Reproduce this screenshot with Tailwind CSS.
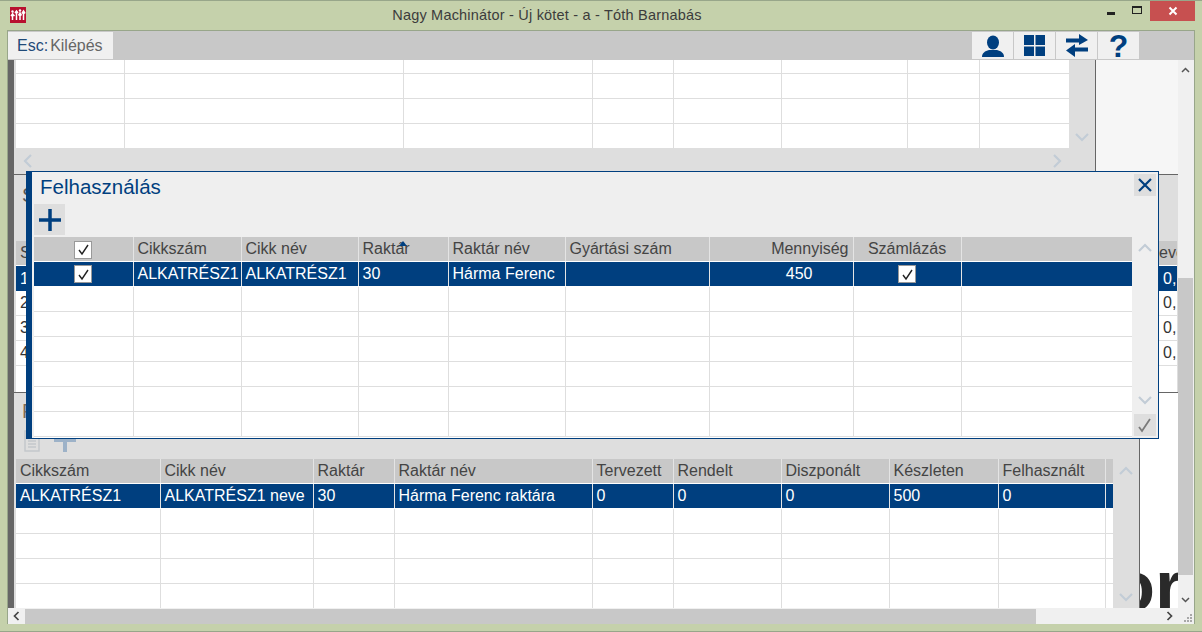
<!DOCTYPE html>
<html lang="hu">
<head>
    <meta charset="UTF-8">
    <title>Nagy Machinátor</title>
    <script src="https://cdn.jsdelivr.net/npm/@tailwindcss/browser@4"></script>
</head>
<body class="bg-[#c5d1ab] overflow-hidden">
<div class="relative w-[1202px] h-[632px] flex flex-col border-t border-b border-[#98a68a] font-['Liberation_Sans',Arial,sans-serif] text-[16px] text-[#333]">

    <!-- title bar -->
    <div class="relative h-[29px] shrink-0 flex items-center justify-center pr-[108px] text-[14.5px] text-[#3c3c3c] tracking-[0.2px]">
        <svg class="absolute left-[10px] top-[6px]" width="16" height="16" viewBox="0 0 16 16">
            <rect width="16" height="16" fill="#b8102f"/>
            <path d="M2.500 13V7L1 9M2.500 7l2 2M6.500 13V4M5 6l1.500-2L8 6M10 13V6M8.500 8.500L10 6l1.500 2.500M13.500 13V4M12 6.500L13.500 4 15 6.500" stroke="#fff" stroke-width="1.500" fill="none"/>
            <circle cx="2.500" cy="4.500" r="1.200" fill="#fff"/><circle cx="10" cy="3.500" r="1.200" fill="#fff"/>
        </svg>
        <span>Nagy Machinátor - Új kötet - a - Tóth Barnabás</span>
        <div class="absolute right-[7px] top-0 flex items-start">
            <div class="w-[27px] h-[20px] flex items-end justify-center"><div class="w-[8px] h-[3px] bg-[#222] mb-[6px]"></div></div>
            <div class="w-[26px] h-[20px] flex items-center justify-center"><div class="w-[10px] h-[8px] -mt-[2px] border border-t-2 border-[#222]"></div></div>
            <div class="w-[45px] h-[20px] bg-[#c75050] flex items-center justify-center">
                <svg width="10" height="10" viewBox="0 0 10 10"><path d="M1.500 1.500l7 7M8.500 1.500l-7 7" stroke="#fff" stroke-width="2"/></svg>
            </div>
        </div>
    </div>

    <div class="mx-[7px] flex-1 min-h-0 flex flex-col border-t border-l border-r border-[#98a68a] mb-[7px]">
        <!-- toolbar -->
        <div class="h-[29px] shrink-0 pt-[1px] bg-[#c8c8c8] flex justify-between">
            <div class="w-[105px] h-[27px] bg-[#f0f0f0] flex items-center pl-[9px]">
                <span class="text-[#1f4a78]">Esc:</span><span class="text-[#666] ml-[2px]">Kilépés</span>
            </div>
            <div class="flex gap-[1px] mr-[55px] h-[27px]">
                <div class="w-[41px] bg-[#f0f0f0] flex items-center justify-center">
                    <svg width="22" height="22" viewBox="0 0 22 22" fill="#003f7f"><ellipse cx="11" cy="7.500" rx="6" ry="7"/><path d="M0 22c0-4 3-6 7-7h8c4 1 7 3 7 7z"/></svg>
                </div>
                <div class="w-[41px] bg-[#f0f0f0] flex items-center justify-center">
                    <svg width="21" height="21" viewBox="0 0 21 21" fill="#003f7f"><rect width="10" height="10"/><rect x="11.500" width="9.500" height="10"/><rect y="11.500" width="10" height="9.500"/><rect x="11.500" y="11.500" width="9.500" height="9.500"/></svg>
                </div>
                <div class="w-[41px] bg-[#f0f0f0] flex items-center justify-center">
                    <svg width="24" height="24" viewBox="0 0 24 24" fill="#003f7f"><path d="M1 4.500h13V0l9 6-9 5V8.500H1zM23 13.500H10V10l-9 6.500 9 6.500v-5.500h13z"/></svg>
                </div>
                <div class="w-[41px] bg-[#f0f0f0] flex items-center justify-center text-[#003f7f] font-bold text-[32px] leading-none">?</div>
            </div>
        </div>

        <div class="flex-1 min-h-0 flex">
            <div class="w-[6px] bg-[#666]"></div>

            <div class="w-[1164px] flex flex-col">
                <!-- upper grid -->
                <div class="h-[114px] shrink-0 flex bg-[#f6f6f6]">
                    <div class="w-[1082px] bg-[#dedede] border-r border-[#666] pl-[2px] flex flex-col">
                        <div class="h-[88px] flex">
                            <div class="w-[1053px] bg-white overflow-hidden"><table class="-mt-[12px] table-fixed border-collapse w-[1053px]" data-rows="4" data-cols="108,279,189,81,108,126,72,90"></table></div>
                            <div class="w-[26px] flex flex-col justify-end items-center pb-[6px]">
                                <svg width="16" height="10" viewBox="0 0 16 10"><path d="M2 2l6 6 6-6" stroke="#c2ccd6" stroke-width="2.200" fill="none"/></svg>
                            </div>
                        </div>
                        <div class="h-[26px] flex justify-between items-center pl-[7px] pr-[33px]">
                            <svg width="10" height="16" viewBox="0 0 10 16"><path d="M8 2L2 8l6 6" stroke="#c2ccd6" stroke-width="2.200" fill="none"/></svg>
                            <svg width="10" height="16" viewBox="0 0 10 16"><path d="M2 2l6 6-6 6" stroke="#c2ccd6" stroke-width="2.200" fill="none"/></svg>
                        </div>
                    </div>
                </div>

                <!-- middle panel, mostly under the dialog -->
                <div class="h-[219px] shrink-0 bg-[#dedede] border-t border-b border-[#666] pl-[2px] pr-[1px] flex flex-col">
                    <div class="h-[66px] shrink-0 pl-[6px] pt-[5px] text-[#555] text-[20px]">S</div>
                    <div class="h-[25px] flex bg-[#c8c8c8] text-[#444] items-center border-b border-white"><span class="pl-[4px]">S</span><span class="ml-auto w-[18px] overflow-hidden">eve</span></div>
                    <div class="h-[25px] flex bg-[#003f7f] text-white items-center"><span class="pl-[4px]">1</span><span class="ml-auto w-[18px] pl-[4px] overflow-hidden">0,</span></div>
                    <div class="h-[25px] flex bg-white items-center border-b border-[#dedede]"><span class="pl-[4px]">2</span><span class="ml-auto w-[18px] pl-[4px] overflow-hidden">0,</span></div>
                    <div class="h-[25px] flex bg-white items-center border-b border-[#dedede]"><span class="pl-[4px]">3</span><span class="ml-auto w-[18px] pl-[4px] overflow-hidden">0,</span></div>
                    <div class="h-[25px] flex bg-white items-center border-b border-[#dedede]"><span class="pl-[4px]">4</span><span class="ml-auto w-[18px] pl-[4px] overflow-hidden">0,</span></div>
                    <div class="flex-1 bg-white"></div>
                </div>

                <!-- lower grid -->
                <div class="flex-1 min-h-0 flex bg-white overflow-hidden">
                    <div class="w-[1126px] shrink-0 bg-[#dedede] border-r border-[#666] pl-[2px] flex flex-col">
                        <div class="h-[66px] shrink-0 pl-[8px] flex flex-col">
                            <div class="h-[37px] shrink-0 -ml-[2px] pt-[6px] text-[#7a6a5a] text-[20px] leading-[24px]">F</div>
                            <div class="flex items-start gap-[14px]">
                                <svg width="16" height="22" viewBox="0 0 16 22" fill="none" stroke="#c4c8cc" stroke-width="1.500"><path d="M1 1h9l5 5v15H1zM4 11h8M4 14h8M4 17h8"/></svg>
                                <svg width="22" height="22" viewBox="0 0 22 22"><path d="M0 10h22M11 0v22" stroke="#9db2c8" stroke-width="4"/></svg>
                            </div>
                        </div>
                        <div class="flex flex-1 min-h-0">
                            <div class="w-[1098px] bg-white overflow-hidden"><table class="table-fixed border-collapse w-[1098px]" id="lowerGrid"></table></div>
                            <div class="w-[26px] flex flex-col justify-between items-center pt-[7px] pb-[6px]">
                                <svg width="16" height="10" viewBox="0 0 16 10"><path d="M2 8l6-6 6 6" stroke="#c2ccd6" stroke-width="2.200" fill="none"/></svg>
                                <svg width="16" height="10" viewBox="0 0 16 10"><path d="M2 2l6 6 6-6" stroke="#c2ccd6" stroke-width="2.200" fill="none"/></svg>
                            </div>
                        </div>
                    </div>
                    <div class="flex-1 min-w-0 flex items-end justify-end overflow-hidden"><span class="shrink-0 -mr-[5px] -mb-[14px] font-bold text-[#2a2a2a] text-[72px] leading-none whitespace-nowrap">or</span></div>
                </div>
            </div>

            <!-- window scrollbar, vertical -->
            <div class="flex-1 bg-[#f0f0f0] flex flex-col pr-[1px]">
                <div class="h-[16px] shrink-0 flex items-center justify-center mt-[2px]"><svg width="9" height="6" viewBox="0 0 9 6"><path d="M1 5l3.500-3.500L8 5" stroke="#555" stroke-width="1.500" fill="none"/></svg></div>
                <div class="h-[200px] shrink-0"></div>
                <div class="h-[297px] shrink-0 bg-[#c8c8c8]"></div>
                <div class="flex-1 flex items-center justify-center pt-[16px]"><svg width="9" height="6" viewBox="0 0 9 6"><path d="M1 1l3.500 3.500L8 1" stroke="#555" stroke-width="1.500" fill="none"/></svg></div>
            </div>
        </div>

        <!-- window scrollbar, horizontal -->
        <div class="h-[16px] shrink-0 bg-[#f0f0f0] flex items-center">
            <div class="w-[17px] flex justify-center"><svg width="7" height="10" viewBox="0 0 7 10"><path d="M5.500 1L1.500 5l4 4" stroke="#444" stroke-width="1.700" fill="none"/></svg></div>
            <div class="w-[1011px] h-[15px] bg-[#c8c8c8]"></div>
            <div class="flex-1 flex justify-end pr-[21px]"><svg width="7" height="10" viewBox="0 0 7 10"><path d="M1.500 1l4 4-4 4" stroke="#444" stroke-width="1.700" fill="none"/></svg></div>
        </div>
    </div>

    <!-- Felhasználás dialog -->
    <div class="absolute left-[26px] top-[170px] w-[1133px] h-[268px] flex bg-[#efefef] border-t border-b border-r border-[#003f7f]">
        <div class="w-[6px] bg-[#003f7f] shrink-0"></div>
        <div class="flex-1 min-w-0 pl-[2px] flex flex-col">
            <div class="h-[32px] shrink-0 flex justify-between pr-[2px]">
                <div class="text-[20.500px] leading-[30px] pl-[6px] text-[#003f7f]">Felhasználás</div>
                <div class="w-[22px] h-[22px] mt-[2px] bg-[#dedede] flex items-center justify-center">
                    <svg width="16" height="16" viewBox="0 0 16 16"><path d="M2 2l12 12M14 2L2 14" stroke="#003f7f" stroke-width="2.200"/></svg>
                </div>
            </div>
            <div class="h-[33px] shrink-0">
                <div class="w-[31px] h-[31px] bg-[#dedede] flex items-center justify-center">
                    <svg width="22" height="22" viewBox="0 0 22 22"><path d="M0 11h22M11 0v22" stroke="#003f7f" stroke-width="3.500"/></svg>
                </div>
            </div>
            <div class="flex-1 min-h-0 flex">
                <div class="w-[1098px] bg-white overflow-hidden"><table class="table-fixed border-collapse w-[1098px]" id="useGrid"></table></div>
                <div class="flex-1 flex flex-col items-center">
                    <svg class="mt-[6px]" width="16" height="10" viewBox="0 0 16 10"><path d="M2 8l6-6 6 6" stroke="#c2ccd6" stroke-width="2.200" fill="none"/></svg>
                    <svg class="mt-[142px]" width="16" height="10" viewBox="0 0 16 10"><path d="M2 2l6 6 6-6" stroke="#c2ccd6" stroke-width="2.200" fill="none"/></svg>
                    <div class="mt-[9px] w-[22px] h-[22px] bg-[#dedede] flex items-center justify-center">
                        <svg width="16" height="16" viewBox="0 0 16 16"><path d="M2 10l3 4L13 2" stroke="#7a7a7a" stroke-width="1.800" fill="none"/></svg>
                    </div>
                </div>
            </div>
        </div>
    </div>

    <!-- sort arrow on Raktár -->
    <svg class="absolute left-[399px] top-[240px]" width="8" height="5" viewBox="0 0 8 5"><path d="M4 0l4 5H0z" fill="#003f7f"/></svg>

    <!-- resize grip -->
    <svg class="absolute left-[1183px] top-[612px]" width="10" height="10" viewBox="0 0 10 10" fill="#a8a8a8"><rect x="7" y="1" width="2" height="2"/><rect x="4" y="4" width="2" height="2"/><rect x="7" y="4" width="2" height="2"/><rect x="1" y="7" width="2" height="2"/><rect x="4" y="7" width="2" height="2"/><rect x="7" y="7" width="2" height="2"/></svg>
</div>

<script>
const CHECK = '<span class="inline-flex align-middle w-[18px] h-[18px] bg-white border border-[#999] items-center justify-center"><svg width="13" height="13" viewBox="0 0 13 13"><path d="M2 7l3 4 6-9" stroke="#222" stroke-width="1.400" fill="none"/></svg></span>';

function cell(text, align, kind) {
    const alignClass = align === 'c' ? 'text-center' : align === 'r' ? 'text-right' : 'text-left';
    if (kind === 'head') return `<td class="h-[24px] p-0 px-[4px] leading-[20px] bg-[#c8c8c8] text-[#444] border-r border-[#e4e4e4] border-b border-b-white whitespace-nowrap overflow-hidden font-normal ${alignClass}">${text}</td>`;
    if (kind === 'sel') return `<td class="h-[25px] p-0 px-[4px] leading-[20px] bg-[#003f7f] text-white border-r border-[#e4e4e4] border-b border-b-white whitespace-nowrap overflow-hidden ${alignClass}">${text}</td>`;
    return `<td class="h-[25px] p-0 px-[4px] leading-[20px] bg-white border-r border-b border-[#dedede]">${text}</td>`;
}

function buildGrid(table, widths, head, sel, aligns, emptyRows) {
    let html = '<colgroup>' + widths.map(w => `<col style="width:${w}px">`).join('') + '</colgroup>';
    if (head) html += '<tr>' + head.map((t, i) => cell(t, aligns[i], 'head')).join('') + '</tr>';
    if (sel) html += '<tr>' + sel.map((t, i) => cell(t, aligns[i], 'sel')).join('') + '</tr>';
    for (let r = 0; r < emptyRows; r++) {
        html += '<tr>' + widths.map(() => cell('')).join('') + '</tr>';
    }
    table.innerHTML = html;
}

// upper grid has no visible text, only lines
const upper = document.querySelector('[data-rows]');
buildGrid(upper, upper.dataset.cols.split(',').map(Number), null, null, [], Number(upper.dataset.rows));

buildGrid(document.getElementById('useGrid'),
    [99, 108, 117, 90, 117, 144, 144, 108, 171],
    [CHECK, 'Cikkszám', 'Cikk név', 'Raktár', 'Raktár név', 'Gyártási szám', 'Mennyiség', 'Számlázás', ''],
    [CHECK, 'ALKATRÉSZ1', 'ALKATRÉSZ1', '30', 'Hárma Ferenc', '', '<span class="mr-[36px]">450</span>', CHECK, ''],
    ['c', 'l', 'l', 'l', 'l', 'l', 'r', 'c', 'l'], 6);

buildGrid(document.getElementById('lowerGrid'),
    [144, 153, 81, 198, 81, 108, 108, 109, 107, 9],
    ['Cikkszám', 'Cikk név', 'Raktár', 'Raktár név', 'Tervezett', 'Rendelt', 'Diszponált', 'Készleten', 'Felhasznált', ''],
    ['ALKATRÉSZ1', 'ALKATRÉSZ1 neve', '30', 'Hárma Ferenc raktára', '0', '0', '0', '500', '0', ''],
    ['l', 'l', 'l', 'l', 'l', 'l', 'l', 'l', 'l', 'l'], 4);
</script>
</body>
</html>
